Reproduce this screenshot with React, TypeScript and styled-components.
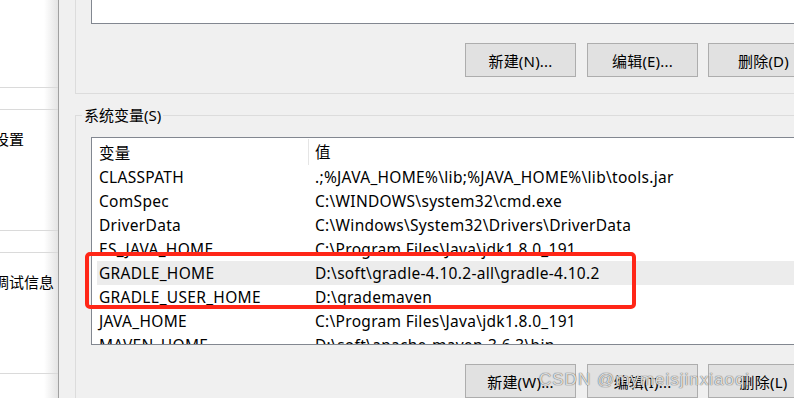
import React from 'react'
import styled, { createGlobalStyle } from 'styled-components'

//--------------------------------------
// style
//--------------------------------------
const GlobalStyle = createGlobalStyle`
  html, body {
    margin: 0;
    padding: 0;
    background: #f0f0f0;
  }
  body {
    font-family: 'Noto Sans', 'Noto Sans CJK SC', sans-serif;
    font-size: 15.5px;
    letter-spacing: 0.3px;
    color: #000;
  }
`

const Screen = styled.div`
  position: relative;
  width: 794px;
  height: 398px;
  overflow: hidden;
  display: flex;
`

/**
 * 左侧被遮住的系统属性窗口
 */
const SideWindow = styled.div`
  flex: none;
  width: 58px;
  height: 100%;
  padding-top: 87px;
  box-sizing: border-box;
  background: linear-gradient(to right, #ffffff 44px, #e4e4e4 58px);
  overflow: hidden;
  display: flex;
  flex-direction: column;
`

const SideStrip = styled.div`
  height: 21px;
  border-top: 1px solid #dadada;
  border-bottom: 1px solid #dadada;
`

const SideSection = styled.div`
  height: 120px;
  padding-top: 19px;
  box-sizing: border-box;
`

const SideLabel = styled.div`
  font-family: 'Noto Sans CJK SC', sans-serif;
  font-size: 15px;
  letter-spacing: 0;
  line-height: 20px;
  white-space: nowrap;
  margin-left: -6px;
`

const SideBottom = styled.div`
  border-top: 1px solid #dadada;
`

const Dialog = styled.div`
  flex: none;
  width: 793px;
  border-left: 1px solid #a0a0a0;
  background: #f0f0f0;
  padding: 0 16px 0 16px;
  box-sizing: border-box;
  display: flex;
  flex-direction: column;
`

const UserGroup = styled.div`
  border: 1px solid #dcdcdc;
  border-top: none;
  padding: 0 15px 16px 15px;
`

const GroupBox = styled.div`
  position: relative;
  margin-top: 21px;
  border: 1px solid #dcdcdc;
  border-bottom: none;
  padding: 21px 15px 0 15px;
`

const GroupLabel = styled.span`
  position: absolute;
  top: -11px;
  left: 6px;
  padding: 0 2px;
  background: #f0f0f0;
  font-size: 15px;
  letter-spacing: 0;
  line-height: 20px;
`

const UserList = styled.div`
  height: 23px;
  background: #fff;
  border: 1px solid #828790;
  border-top: none;
`

const ListBox = styled.div`
  height: 206px;
  background: #fff;
  border: 1px solid #828790;
  overflow: hidden;
`

const Row = styled.div<{ $header?: boolean; $active?: boolean }>`
  display: flex;
  height: ${(p) => (p.$header ? '27px' : '24px')};
  margin-left: 5px;
  align-items: center;
  background: ${(p) => (p.$active ? '#ececec' : 'transparent')};
  white-space: nowrap;
`

const NameCell = styled.div<{ $header?: boolean }>`
  flex: none;
  width: 212px;
  padding-left: 2px;
  box-sizing: border-box;
  align-self: stretch;
  display: flex;
  align-items: center;
  border-right: 1px solid ${(p) => (p.$header ? '#e5e5e5' : 'transparent')};
  margin: ${(p) => (p.$header ? '1px 0 0 0' : '0')};
`

const ValueCell = styled.div`
  padding-left: 6px;
`

const ButtonRow = styled.div`
  display: flex;
  justify-content: flex-end;
  gap: 10px;
  margin-top: 19px;
`

const Button = styled.button`
  width: 111px;
  height: 34px;
  background: #e1e1e1;
  border: 1px solid #adadad;
  border-radius: 0;
  padding: 0;
  font-family: 'Noto Sans', 'Noto Sans CJK SC', sans-serif;
  font-size: 15px;
  letter-spacing: 0.2px;
  color: #000;
  &:first-child {
    margin-right: 1px;
  }
`

const Highlight = styled.div`
  position: absolute;
  left: 85px;
  top: 252px;
  width: 551px;
  height: 57px;
  box-sizing: border-box;
  border: 4px solid #ff2617;
  border-radius: 5px;
  pointer-events: none;
`

const Watermark = styled.div`
  position: absolute;
  left: 539px;
  top: 368px;
  font-family: 'Liberation Sans', sans-serif;
  font-size: 17px;
  letter-spacing: 1px;
  line-height: 24px;
  color: rgba(255, 255, 255, 0.8);
  text-shadow: 0 0 1px rgba(70, 70, 70, 0.9), 0 0 1px rgba(70, 70, 70, 0.6);
  white-space: nowrap;
  pointer-events: none;
`

//--------------------------------------
// data
//--------------------------------------
const variables = [
  { name: 'CLASSPATH', value: '.;%JAVA_HOME%\\lib;%JAVA_HOME%\\lib\\tools.jar' },
  { name: 'ComSpec', value: 'C:\\WINDOWS\\system32\\cmd.exe' },
  { name: 'DriverData', value: 'C:\\Windows\\System32\\Drivers\\DriverData' },
  { name: 'ES_JAVA_HOME', value: 'C:\\Program Files\\Java\\jdk1.8.0_191' },
  { name: 'GRADLE_HOME', value: 'D:\\soft\\gradle-4.10.2-all\\gradle-4.10.2', active: true },
  { name: 'GRADLE_USER_HOME', value: 'D:\\grademaven' },
  { name: 'JAVA_HOME', value: 'C:\\Program Files\\Java\\jdk1.8.0_191' },
  { name: 'MAVEN_HOME', value: 'D:\\soft\\apache-maven-3.6.3\\bin' },
]

//----------------------------------
// component
//----------------------------------
const App = () => {
  return (
    <Screen>
      <GlobalStyle />
      <SideWindow>
        <SideStrip />
        <SideSection>
          <SideLabel>设置</SideLabel>
        </SideSection>
        <SideStrip />
        <SideSection>
          <SideLabel>调试信息</SideLabel>
        </SideSection>
        <SideBottom />
      </SideWindow>

      <Dialog>
        {/** @section 用户变量 */}
        <UserGroup>
          <UserList />
          <ButtonRow>
            <Button>新建(N)...</Button>
            <Button>编辑(E)...</Button>
            <Button>删除(D)</Button>
          </ButtonRow>
        </UserGroup>

        {/** @section 系统变量 */}
        <GroupBox>
          <GroupLabel>系统变量(S)</GroupLabel>
          <ListBox>
            <Row $header>
              <NameCell $header>变量</NameCell>
              <ValueCell>值</ValueCell>
            </Row>
            {variables.map((v) => (
              <Row key={v.name} $active={v.active}>
                <NameCell>{v.name}</NameCell>
                <ValueCell>{v.value}</ValueCell>
              </Row>
            ))}
          </ListBox>
          <ButtonRow>
            <Button>新建(W)...</Button>
            <Button>编辑(I)...</Button>
            <Button>删除(L)</Button>
          </ButtonRow>
        </GroupBox>
      </Dialog>

      <Highlight />
      <Watermark>CSDN @mymeisjinxiaoqi</Watermark>
    </Screen>
  )
}

export default App
